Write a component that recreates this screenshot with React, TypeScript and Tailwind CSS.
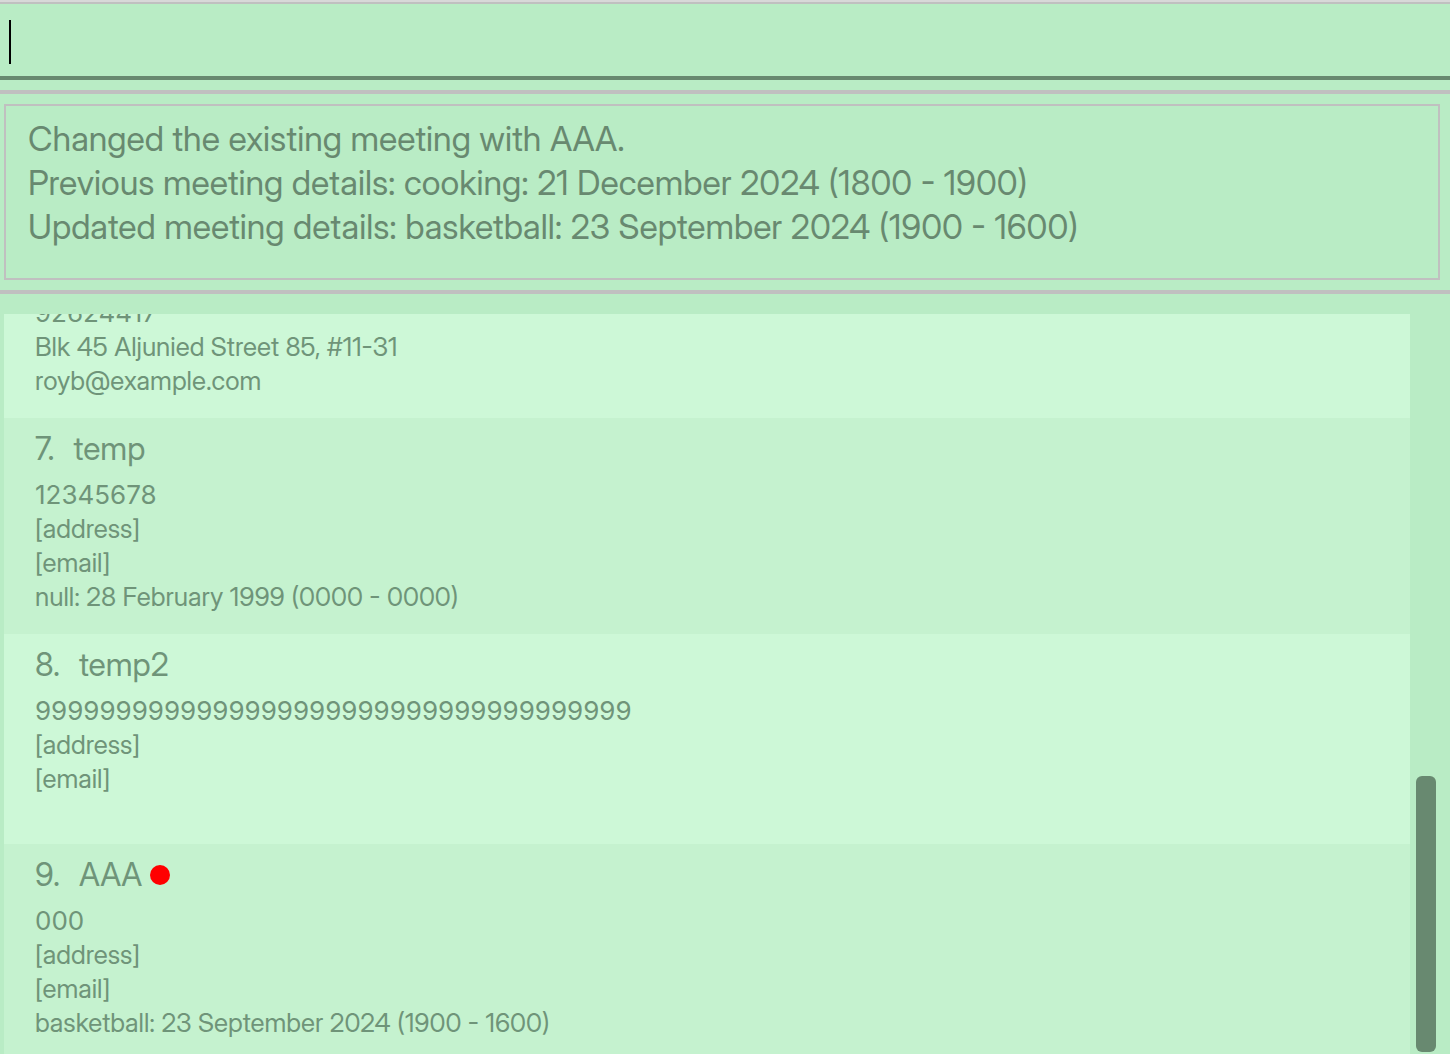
type Person = {
  id: number;
  name?: string;
  alert?: boolean;
  phone: string;
  details: string[];
};

const people: Person[] = [
  { id: 6, phone: "92624417", details: ["Blk 45 Aljunied Street 85, #11-31", "royb@example.com"] },
  { id: 7, name: "temp", phone: "12345678", details: ["[address]", "[email]", "null: 28 February 1999 (0000 - 0000)"] },
  { id: 8, name: "temp2", phone: "9999999999999999999999999999999999999", details: ["[address]", "[email]"] },
  {
    id: 9,
    name: "AAA",
    alert: true,
    phone: "000",
    details: ["[address]", "[email]", "basketball: 23 September 2024 (1900 - 1600)"],
  },
];

function PersonCard({ person }: { person: Person }) {
  const background = person.id % 2 === 0 ? "bg-[#cdf8d7]" : "bg-[#c5f2cf]";
  const offset = person.name ? "pt-[10px]" : "-mt-[18px]";
  const bottom = person.id === 8 ? "pb-12" : "pb-5";
  return (
    <li className={`shrink-0 px-[31px] text-[26px] leading-[34px] ${background} ${offset} ${bottom}`}>
      {person.name && (
        <h2 className="mb-2 flex items-center gap-[19px] text-[32px] leading-[42px]">
          <span>{person.id}.</span>
          <span className="flex items-center gap-2">
            {person.name}
            {person.alert && <span className="size-5 rounded-full bg-[#ff0000]" />}
          </span>
        </h2>
      )}
      <p className="font-['Inter',sans-serif]">{person.phone}</p>
      {person.details.map((line) => (
        <p key={line}>{line}</p>
      ))}
    </li>
  );
}

export default function App() {
  return (
    <div className="flex h-screen flex-col overflow-hidden bg-[#b9ecc5] font-['Inter_Display','Inter',sans-serif] text-[#6f9479]">
      <div className="h-1 shrink-0 border-b-2 border-[#c0c0c0] bg-[#d8d8d8]" />
      <form className="relative shrink-0 border-b-4 border-[#688970]" onSubmit={(e) => e.preventDefault()}>
        <input
          aria-label="Command"
          className="block h-[72px] w-full bg-transparent px-[10px] text-[34px] caret-transparent outline-none"
        />
        <span className="pointer-events-none absolute top-4 left-[9px] h-11 w-0.5 bg-black" />
      </form>
      <section className="mt-[10px] shrink-0 border-y-4 border-[#c0c0c0] py-[10px] pr-[10px] pl-1">
        <div className="border-2 border-[#c0c0c0] px-[22px] pt-[11px] pb-[29px] text-[34px] leading-[44px] text-[#688970]">
          <p>Changed the existing meeting with AAA.</p>
          <p>Previous meeting details: cooking: 21 December 2024 (1800 - 1900)</p>
          <p>Updated meeting details: basketball: 23 September 2024 (1900 - 1600)</p>
        </div>
      </section>
      <main className="mt-5 flex min-h-0 flex-1 pr-[14px] pl-1">
        <ul className="flex min-w-0 flex-1 flex-col overflow-hidden">
          {people.map((person) => (
            <PersonCard key={person.id} person={person} />
          ))}
        </ul>
        <div className="flex w-[26px] flex-col justify-end pb-0.5 pl-1.5">
          <div className="h-[276px] rounded-md bg-[#688970]" />
        </div>
      </main>
    </div>
  );
}
